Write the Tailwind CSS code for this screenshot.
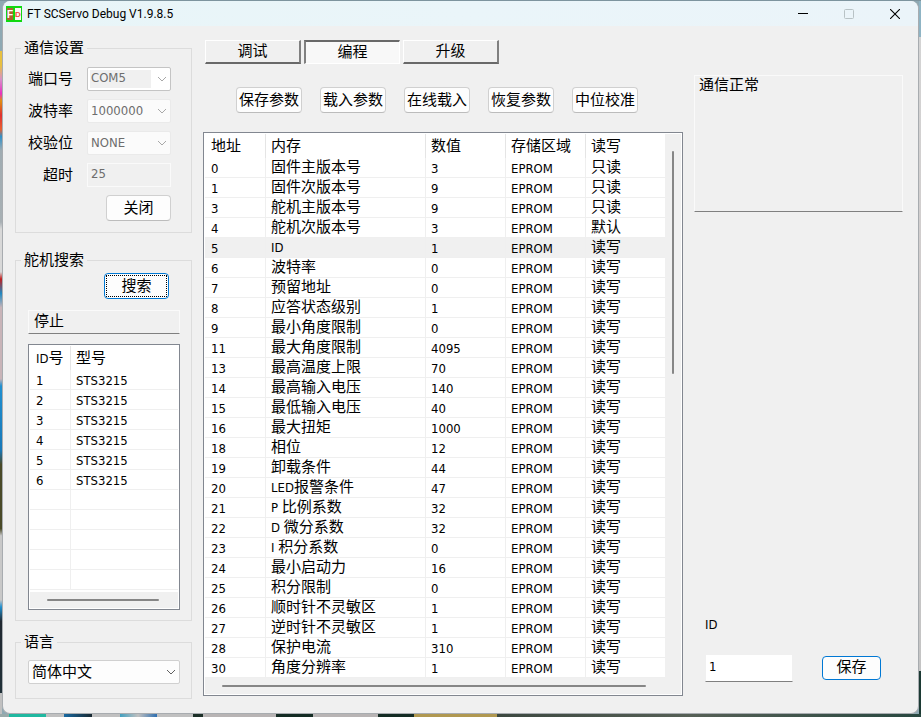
<!DOCTYPE html>
<html lang="zh-CN">
<head>
    <meta charset="UTF-8">
    <meta name="viewport" content="width=device-width, initial-scale=1.0">
    <script src="https://cdn.jsdelivr.net/npm/@tailwindcss/browser@4"></script>
    <title>FT SCServo Debug V1.9.8.5</title>
</head>
<body class="min-h-screen flex flex-col bg-[#8fa9b3] text-black text-[15px] leading-5 font-['DejaVu_Sans_Condensed','Noto_Sans_CJK_SC',sans-serif]">
    <!-- Desktop behind the window -->
    <div class="h-px bg-[#7d949e]"></div>
    <div class="flex-1 flex">
        <div class="w-[2px] bg-[linear-gradient(#8fa9b3_7%,#e8c040_7%,#e8c040_9%,#d890c8_11%,#e830c0_13%,#e09010_14%,#e03030_16%,#e86030_18%,#3090c8_19%,#a0acb2_21%,#a8b0b4_31%,#d8d8d8_32%,#d8d8d8_38%,#c02020_39%,#2088c0_41%,#c8b4b8_43%,#c8b4b8_53%,#2090d0_54%,#1878b8_63%,#4a4a28_65%,#4a4a28_74%,#c8c8c8_75%,#c8c8c8_84%,#2090d0_85%,#202830_87%,#203038_97%,#c0c0c0_97%)]"></div>

        <main class="flex-1 flex flex-col rounded-lg overflow-hidden bg-[#f0f0f0] border-x border-b border-[#a8acb0]">
            <!-- Title bar -->
            <header class="h-[25px] flex items-center bg-linear-to-r from-[#e8f5f8] via-[#eaf5f9] to-[#ebf4f9] pl-[3px]">
                <svg class="w-4 h-4 font-['Liberation_Sans',sans-serif] font-bold" viewBox="0 0 16 16">
                    <path d="M0 0h16v16H0z" fill="#10d810"/>
                    <path d="M1 2h6v12H1z" fill="#b06030"/>
                    <path d="M9 2h6v12H9z" fill="#fff4f4"/>
                    <text x="1" y="12" font-size="10" fill="#fff">F</text>
                    <text x="9" y="11" font-size="8" fill="#f04838">D</text>
                </svg>
                <h1 class="ml-[5px] text-[12px] font-[Roboto,sans-serif]">FT SCServo Debug V1.9.8.5</h1>
                <div class="ml-auto flex">
                    <button type="button" aria-label="最小化" class="w-[46px] h-[25px] flex items-center justify-center">
                        <svg class="w-[10px] h-[10px]" viewBox="0 0 10 10"><path d="M0 4.5h10" stroke="#000"/></svg>
                    </button>
                    <button type="button" aria-label="最大化" disabled class="w-[46px] h-[25px] flex items-center justify-center">
                        <svg class="w-[10px] h-[10px]" viewBox="0 0 10 10"><rect x=".5" y=".5" width="9" height="9" rx="1" fill="none" stroke="#b8c2c5"/></svg>
                    </button>
                    <button type="button" aria-label="关闭窗口" class="w-[46px] h-[25px] flex items-center justify-center">
                        <svg class="w-[10px] h-[10px]" viewBox="0 0 10 10"><path d="M0 0l10 10M10 0L0 10" stroke="#000" stroke-width="1.1"/></svg>
                    </button>
                </div>
            </header>

            <div class="flex-1 flex gap-[11px] pt-3 pl-3 pr-[15px] pb-[14px]">
                <!-- Left column -->
                <div class="w-[177px] flex flex-col">
                    <fieldset class="border border-[#dcdcdc] pl-3 pr-5 pt-[9px] pb-[11px]">
                        <legend class="-ml-[7px] px-[3px]">通信设置</legend>
                        <div class="flex flex-col gap-2">
                            <div class="flex items-center justify-between">
                                <label for="port" class="w-[45px] text-right">端口号</label>
                                <div class="relative">
                                    <select id="port" disabled class="block appearance-none w-[84px] h-6 pl-[3px] pb-[2px] border border-[#c4c4c4] rounded-xs bg-white bg-[linear-gradient(#f0f0f0,#f0f0f0)] bg-[length:61px_18px] bg-[position:2px_2px] bg-no-repeat text-[13px] text-[#6d6d6d] opacity-100">
                                        <option>COM5</option>
                                    </select>
                                    <svg class="pointer-events-none absolute right-1 top-2 w-[10px] h-2" viewBox="0 0 10 8"><path d="M1 2l4 4 4-4" fill="none" stroke="#a8a8a8"/></svg>
                                </div>
                            </div>
                            <div class="flex items-center justify-between">
                                <label for="baud" class="w-[45px] text-right">波特率</label>
                                <div class="relative">
                                    <select id="baud" disabled class="block appearance-none w-[84px] h-6 pl-[3px] border border-[#eaeaea] rounded-xs bg-[#fbfbfb] text-[13px] text-[#6d6d6d] opacity-100">
                                        <option>1000000</option>
                                    </select>
                                    <svg class="pointer-events-none absolute right-1 top-2 w-[10px] h-2" viewBox="0 0 10 8"><path d="M1 2l4 4 4-4" fill="none" stroke="#a8a8a8"/></svg>
                                </div>
                            </div>
                            <div class="flex items-center justify-between">
                                <label for="parity" class="w-[45px] text-right">校验位</label>
                                <div class="relative">
                                    <select id="parity" disabled class="block appearance-none w-[84px] h-6 pl-[3px] border border-[#eaeaea] rounded-xs bg-[#fbfbfb] text-[13px] text-[#6d6d6d] opacity-100">
                                        <option>NONE</option>
                                    </select>
                                    <svg class="pointer-events-none absolute right-1 top-2 w-[10px] h-2" viewBox="0 0 10 8"><path d="M1 2l4 4 4-4" fill="none" stroke="#a8a8a8"/></svg>
                                </div>
                            </div>
                            <div class="flex items-center justify-between">
                                <label for="timeout" class="w-[45px] text-right">超时</label>
                                <input id="timeout" type="text" value="25" disabled class="w-[84px] h-6 pl-[3px] pb-1 border border-[#fafafa] bg-[#f0f0f0] text-[13px] text-[#6d6d6d]">
                            </div>
                            <button type="button" class="self-end w-[65px] h-[26px] border border-[#d0d0d0] border-b-[#bcbcbc] rounded bg-[#fdfdfd]">关闭</button>
                        </div>
                    </fieldset>

                    <fieldset class="mt-[17px] border border-[#dcdcdc] pl-3 pr-[11px] pt-[3px] pb-[10px]">
                        <legend class="-ml-[7px] px-[3px]">舵机搜索</legend>
                        <button type="button" class="block ml-auto mr-[11px] w-[65px] h-[26px] p-px border border-[#0078d4] rounded bg-[#fdfdfd]">
                            <span class="flex items-center justify-center h-full border border-dotted border-black">搜索</span>
                        </button>
                        <p class="mt-[11px] h-6 pl-[5px] border border-[#fafafa] border-b-[#808080]">停止</p>

                        <div class="mt-[10px] border border-[#828790] bg-white p-px">
                            <table class="w-full table-fixed border-separate border-spacing-0 text-left text-[13px]">
                                <colgroup>
                                    <col class="w-[41px]">
                                    <col>
                                </colgroup>
                                <thead>
                                    <tr class="h-6">
                                        <th class="p-0 pl-[6px] font-normal whitespace-nowrap border-r border-[#e5e5e5]">ID<span class="text-[15px]">号</span></th>
                                        <th class="p-0 pl-[5px] font-normal text-[15px]">型号</th>
                                    </tr>
                                </thead>
                                <tbody id="servoRows"></tbody>
                            </table>
                            <div class="mt-[2px] h-4 pl-[17px] pr-[19px] flex items-center bg-[#f0f0f0]">
                                <div class="w-full h-[2px] rounded-full bg-[#868686]"></div>
                            </div>
                        </div>
                    </fieldset>

                    <fieldset class="mt-[11px] border border-[#dcdcdc] pl-3 pr-[11px] pt-2 pb-[14px]">
                        <legend class="-ml-[7px] px-[3px]"><label for="language">语言</label></legend>
                        <div class="relative">
                            <select id="language" class="block appearance-none w-full h-6 pl-[3px] border border-[#d0d0d0] rounded-xs bg-[#fdfdfd]">
                                <option>简体中文</option>
                            </select>
                            <svg class="pointer-events-none absolute right-1 top-2 w-[10px] h-2" viewBox="0 0 10 8"><path d="M1 2l4 4 4-4" fill="none" stroke="#606060"/></svg>
                        </div>
                    </fieldset>
                </div>

                <!-- Memory table -->
                <div class="flex-1 flex flex-col pt-[2px]">
                    <nav class="flex gap-[3px] pl-[2px]">
                        <button type="button" class="w-24 h-6 pb-[2px] border-t border-l border-r-2 border-b-2 border-t-white border-l-white border-r-[#808080] border-b-[#696969]">调试</button>
                        <button type="button" class="w-24 h-6 pb-[2px] border-t-2 border-l-2 border-r border-b border-t-[#696969] border-l-[#808080] border-r-white border-b-white bg-[#f8f8f8]">编程</button>
                        <button type="button" class="w-24 h-6 pb-[2px] border-t border-l border-r-2 border-b-2 border-t-white border-l-white border-r-[#808080] border-b-[#696969]">升级</button>
                    </nav>

                    <div class="mt-[23px] flex gap-[18px] pl-[33px]">
                        <button type="button" class="w-[66px] h-[26px] whitespace-nowrap border border-[#d0d0d0] border-b-[#bcbcbc] rounded bg-[#fdfdfd]">保存参数</button>
                        <button type="button" class="w-[66px] h-[26px] whitespace-nowrap border border-[#d0d0d0] border-b-[#bcbcbc] rounded bg-[#fdfdfd]">载入参数</button>
                        <button type="button" class="w-[66px] h-[26px] whitespace-nowrap border border-[#d0d0d0] border-b-[#bcbcbc] rounded bg-[#fdfdfd]">在线载入</button>
                        <button type="button" class="w-[66px] h-[26px] whitespace-nowrap border border-[#d0d0d0] border-b-[#bcbcbc] rounded bg-[#fdfdfd]">恢复参数</button>
                        <button type="button" class="w-[66px] h-[26px] whitespace-nowrap border border-[#d0d0d0] border-b-[#bcbcbc] rounded bg-[#fdfdfd]">中位校准</button>
                    </div>

                    <div class="mt-[19px] border border-[#828790] bg-white p-px">
                        <div class="flex">
                            <table class="flex-1 table-fixed border-separate border-spacing-0 text-left text-[13px]">
                                <colgroup>
                                    <col class="w-[61px]">
                                    <col class="w-[160px]">
                                    <col class="w-[80px]">
                                    <col class="w-[80px]">
                                    <col>
                                </colgroup>
                                <thead class="text-[15px]">
                                    <tr class="h-6">
                                        <th class="p-0 pl-[6px] font-normal border-r border-[#e5e5e5]">地址</th>
                                        <th class="p-0 pl-[5px] font-normal border-r border-[#e5e5e5]">内存</th>
                                        <th class="p-0 pl-[5px] font-normal border-r border-[#e5e5e5]">数值</th>
                                        <th class="p-0 pl-[5px] font-normal border-r border-[#e5e5e5]">存储区域</th>
                                        <th class="p-0 pl-[5px] font-normal">读写</th>
                                    </tr>
                                </thead>
                                <tbody id="memoryRows"></tbody>
                            </table>
                            <div class="w-4 pt-[17px] flex justify-center bg-[#f0f0f0]">
                                <div class="w-[2px] h-[223px] rounded-full bg-[#868686]"></div>
                            </div>
                        </div>
                        <div class="h-4 pl-[17px] pr-[35px] flex items-center bg-[#f0f0f0]">
                            <div class="w-full h-[2px] rounded-full bg-[#868686]"></div>
                        </div>
                    </div>
                </div>

                <!-- Status and value editor -->
                <div class="w-[209px] flex flex-col pt-[37px]">
                    <p class="h-[137px] pl-1 leading-[18px] border border-[#fafafa] border-b-[#808080]">通信正常</p>
                    <form class="mt-auto pl-[11px] pb-[17px]">
                        <label for="value" class="text-[13px]">ID</label>
                        <div class="mt-[19px] flex items-center gap-[29px]">
                            <input id="value" type="text" value="1" class="w-[88px] h-7 pl-[3px] pb-1 border border-[#f0f0f0] border-b-[#808080] bg-white text-[13px]">
                            <button type="button" class="w-[59px] h-6 pb-[2px] border border-[#0078d4] rounded bg-[#fdfdfd]">保存</button>
                        </div>
                    </form>
                </div>
            </div>
        </main>

        <div class="w-[2px] bg-[linear-gradient(#8fb4c4_5%,#d4d4d4_5%,#d0cccc_40%,#c4c4c4_94%,#1c3a34_94%)]"></div>
    </div>
    <div class="h-[3px] bg-[linear-gradient(90deg,#9aa_1%,#20b8a0_1%,#20b8a0_5%,#c0c0c0_5%,#c0c0c0_7%,#1868a0_7%,#182830_10%,#c0c0c0_10%,#c0c0c0_13%,#40a0c0_13%,#c0c0c0_15%,#3070b0_17%,#c0c0c0_17%,#c0c0c0_21%,#1c3028_21%,#1c3028_22%,#b8b4b4_22%,#b8b4b4_30%,#142c24_30%,#142c24_34%,#b8b4b4_34%,#b8b4b4_41%,#142c24_41%,#142c24_45%,#b09850_45%,#b09850_54%,#3c4840_54%,#566056_75%,#284840_100%)]"></div>

    <script>
        // 型号列表，空行补足到 11 行
        var servos = [1, 2, 3, 4, 5, 6];
        var servoHtml = '';
        for (var i = 0; i < 11; i++) {
            var id = servos[i];
            servoHtml += '<tr class="h-5">' +
                '<td class="h-5 p-0 pt-[2px] pl-[6px] leading-[17px] border-r border-b border-[#efefef]">' + (id || '') + '</td>' +
                '<td class="h-5 p-0 pt-[2px] pl-[5px] leading-[17px] border-b border-[#efefef]">' + (id ? 'STS3215' : '') + '</td></tr>';
        }
        document.getElementById('servoRows').innerHTML = servoHtml;

        // 地址, 内存, 数值, 读写
        var memory = [
            [0, '固件主版本号', 3, '只读'],
            [1, '固件次版本号', 9, '只读'],
            [3, '舵机主版本号', 9, '只读'],
            [4, '舵机次版本号', 3, '默认'],
            [5, 'ID', 1, '读写'],
            [6, '波特率', 0, '读写'],
            [7, '预留地址', 0, '读写'],
            [8, '应答状态级别', 1, '读写'],
            [9, '最小角度限制', 0, '读写'],
            [11, '最大角度限制', 4095, '读写'],
            [13, '最高温度上限', 70, '读写'],
            [14, '最高输入电压', 140, '读写'],
            [15, '最低输入电压', 40, '读写'],
            [16, '最大扭矩', 1000, '读写'],
            [18, '相位', 12, '读写'],
            [19, '卸载条件', 44, '读写'],
            [20, 'LED报警条件', 47, '读写'],
            [21, 'P 比例系数', 32, '读写'],
            [22, 'D 微分系数', 32, '读写'],
            [23, 'I 积分系数', 0, '读写'],
            [24, '最小启动力', 16, '读写'],
            [25, '积分限制', 0, '读写'],
            [26, '顺时针不灵敏区', 1, '读写'],
            [27, '逆时针不灵敏区', 1, '读写'],
            [28, '保护电流', 310, '读写'],
            [30, '角度分辨率', 1, '读写']
        ];
        var memoryHtml = '';
        memory.forEach(function(row) {
            var name = row[1].replace(/^[A-Z]+ ?/, '<span class="text-[13px]">$&</span>');
            var selected = row[0] === 5 ? 'h-5 bg-[#f0f0f0]' : 'h-5';
            memoryHtml += '<tr class="' + selected + '">' +
                '<td class="h-5 p-0 pt-[2px] pl-[6px] leading-[17px] border-r border-b border-[#efefef]">' + row[0] + '</td>' +
                '<td class="h-5 p-0 pl-[5px] leading-[19px] border-r border-b border-[#efefef] text-[15px]">' + name + '</td>' +
                '<td class="h-5 p-0 pt-[2px] pl-[5px] leading-[17px] border-r border-b border-[#efefef]">' + row[2] + '</td>' +
                '<td class="h-5 p-0 pt-[2px] pl-[5px] leading-[17px] border-r border-b border-[#efefef]">EPROM</td>' +
                '<td class="h-5 p-0 pl-[5px] leading-[19px] border-b border-[#efefef] text-[15px]">' + row[3] + '</td></tr>';
        });
        document.getElementById('memoryRows').innerHTML = memoryHtml;
    </script>
</body>
</html>
